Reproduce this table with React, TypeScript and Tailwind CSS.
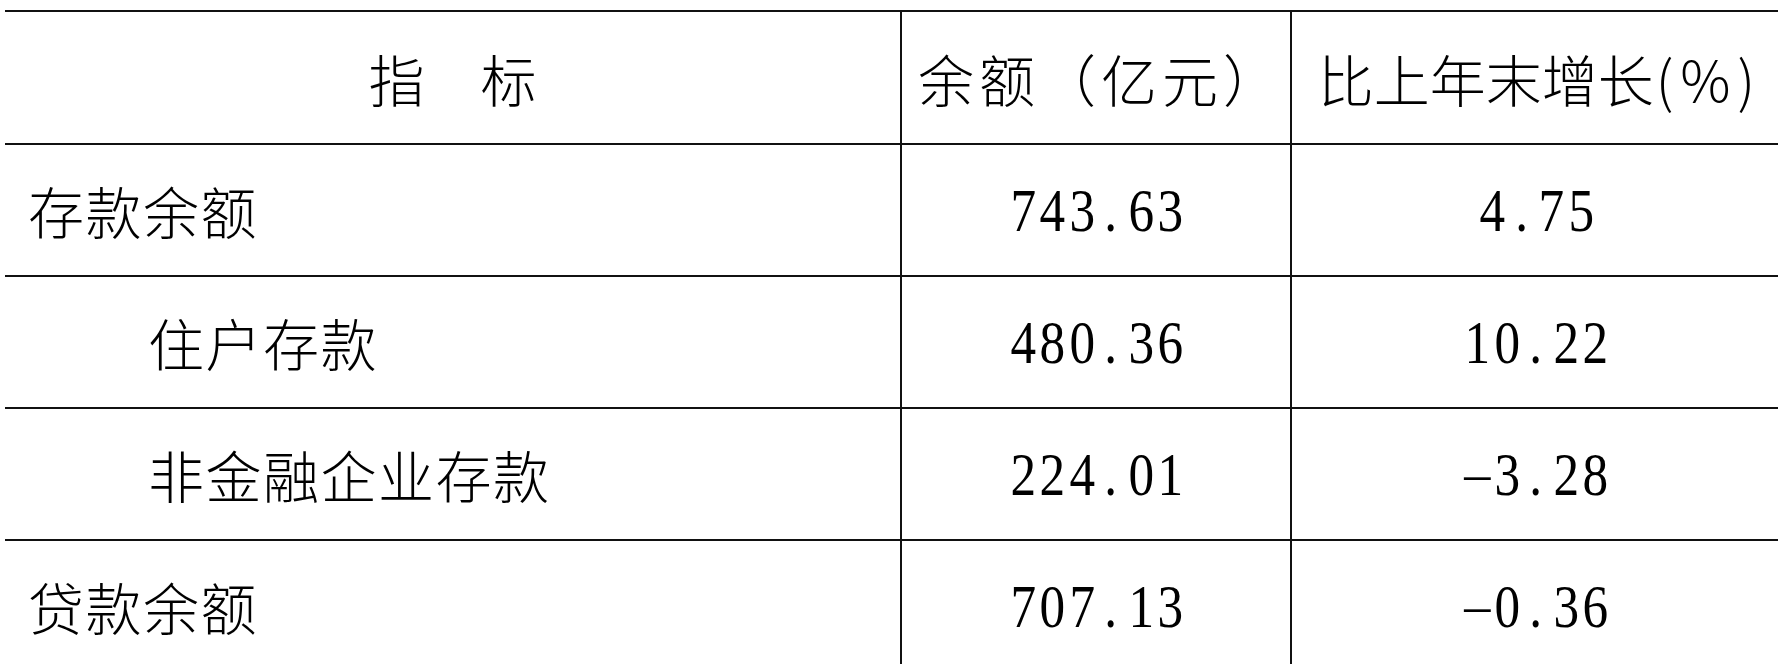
import * as React from 'react';

type Row = { label: string; sub?: boolean; amount: string; growth: string };

const rows: Row[] = [
  { label: '存款余额', amount: '743.63', growth: '4.75' },
  { label: '住户存款', sub: true, amount: '480.36', growth: '10.22' },
  { label: '非金融企业存款', sub: true, amount: '224.01', growth: '-3.28' },
  { label: '贷款余额', amount: '707.13', growth: '-0.36' },
];

// 半角等宽数字：每个字符占一格，模拟原表的仿宋数字
function Num({ value }: { value: string }) {
  return (
    <span className="flex font-['Liberation_Serif',serif] text-[61px] leading-none text-black">
      {value.split('').map((c, i) => (
        <span key={i} className="inline-block w-[29.5px] text-center">
          <span
            className={
              c === '-'
                ? 'inline-block scale-x-[1.7] scale-y-[0.6]'
                : 'inline-block scale-x-[0.84]'
            }
          >
            {c}
          </span>
        </span>
      ))}
    </span>
  );
}

export default function App() {
  return (
    <div className="h-[664px] w-[1778px] overflow-hidden bg-white pl-[5px] pt-[10px] font-['Noto_Sans_CJK_SC',sans-serif] text-black">
      <div className="w-[1775px]">
        <div className="grid h-[133px] grid-cols-[895px_390px_490px] border-t-2 border-[#111]">
          <div className="flex items-center justify-center text-[56px] font-light leading-none">
            指　标
          </div>
          <div className="flex items-center justify-center border-l-2 border-[#111] pl-[10px] text-[56px] font-light leading-none tracking-[5px]">
            余额（亿元）
          </div>
          <div className="flex items-center justify-center border-l-2 border-[#111] pl-[8px] text-[56px] font-light leading-none">
            比上年末增长<span className="ml-[2px] tracking-[7px]">(%)</span>
          </div>
        </div>
        {rows.map((r) => (
          <div
            key={r.label}
            className="grid h-[132px] grid-cols-[895px_390px_490px] border-t-2 border-[#111]"
          >
            <div
              className={
                r.sub
                  ? 'flex items-center pl-[143px] text-[56px] font-light leading-none tracking-[1.5px]'
                  : 'flex items-center pl-[23px] text-[56px] font-light leading-none tracking-[1.5px]'
              }
            >
              {r.label}
            </div>
            <div className="flex items-center justify-center border-l-2 border-[#111]">
              <Num value={r.amount} />
            </div>
            <div className="flex items-center justify-center border-l-2 border-[#111]">
              <Num value={r.growth} />
            </div>
          </div>
        ))}
      </div>
    </div>
  );
}
